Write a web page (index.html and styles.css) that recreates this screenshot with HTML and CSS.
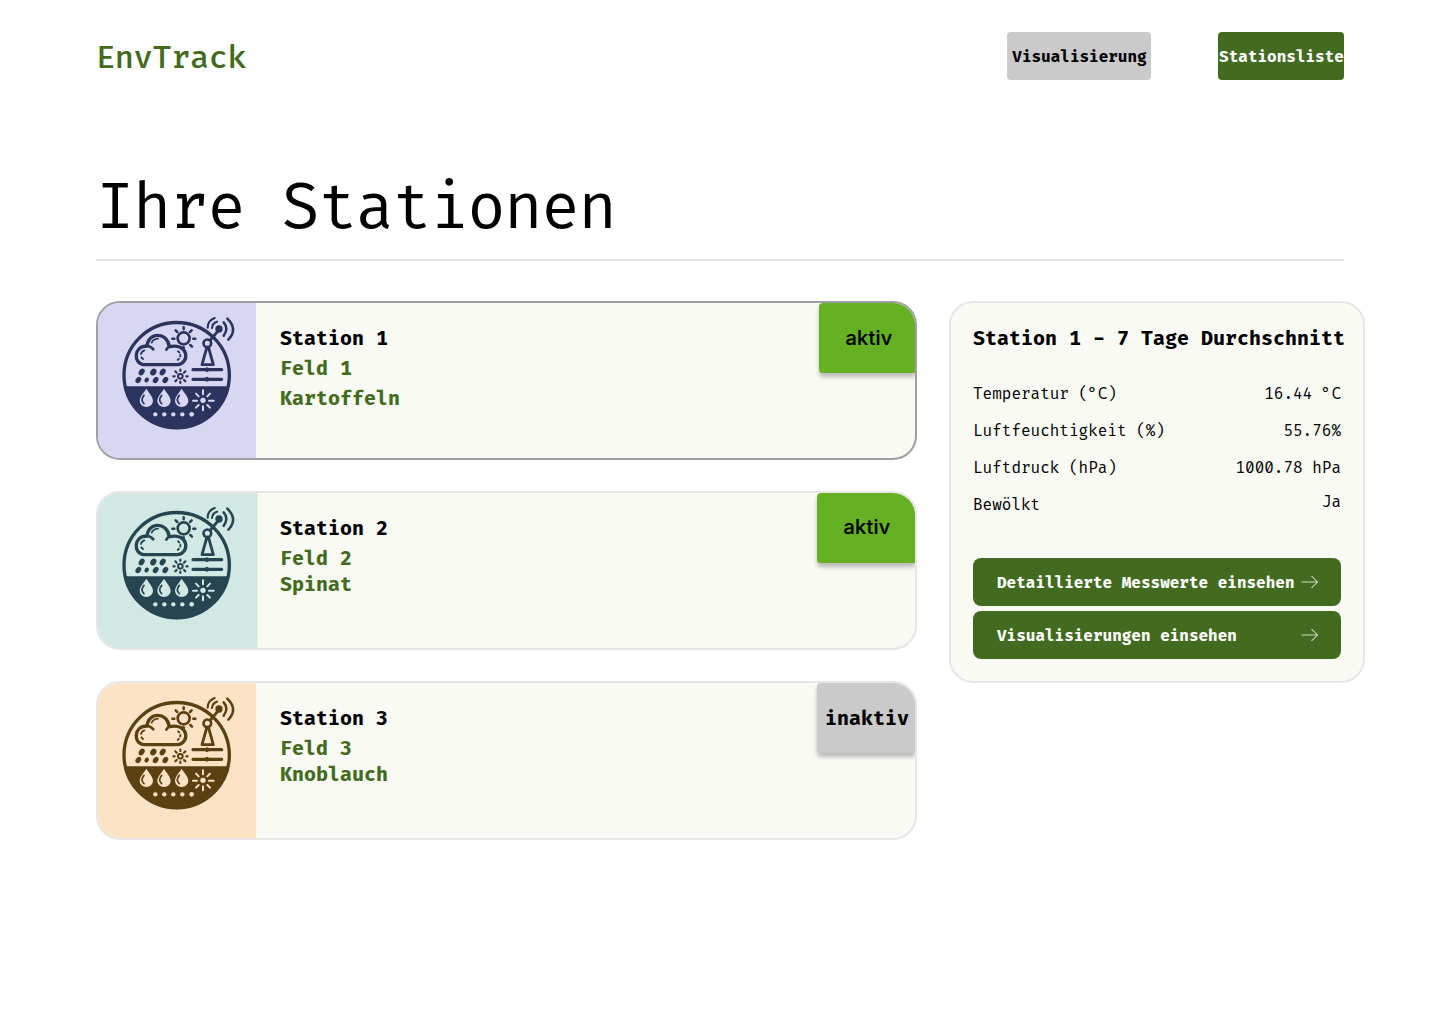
FILE: index.html
```html
<!DOCTYPE html>
<html lang="de">
<head>
<meta charset="utf-8">
<title>EnvTrack – Ihre Stationen</title>
<link rel="stylesheet" href="styles.css">
</head>
<body>
<svg class="sprite" aria-hidden="true">
  <symbol id="station" viewBox="24 24 474 465">
    <g fill="none" stroke="currentColor" stroke-width="10" stroke-linecap="round" stroke-linejoin="round">
      <circle cx="260" cy="240.500" r="158"/>
      <path d="M160 209C130 205 130 153 171 153C174 112 231 108 238 155C298 142 299 205 264 209Z"/>
      <path d="M171 153Q182 153 190 163M238 155Q232 158 229 164" stroke-width="8"/>
      <path d="M185 143Q190 132 204 131M153 177Q154 169 163 166M154 187L159 192" stroke-width="5.500"/>
      <path d="M264 169Q276 178 268 189Q265 195 256 198" stroke-width="5.500" stroke-dasharray="5 8"/>
      <circle cx="281" cy="130" r="18" stroke-width="8"/>
      <path d="M281 97V103M281 157V163M247 131H253M310 131H316M257 106L262 111M305 106L300 111M301 150L306 155" stroke-width="7.500"/>
      <circle cx="352" cy="145" r="11.500" stroke-width="8"/>
      <path d="M350 159L336 209H370L356 159M361 135L385 107" stroke-width="8.500"/>
      <path d="M374 69Q353 77 353 98M381 80Q367 84 366 99" stroke-width="6.500"/>
      <path d="M401 82Q417 100 401 122M412 71Q445 103 415 134" stroke-width="7.500"/>
      <path d="M309 224H395M309 253H395" stroke-width="9.500"/>
      <path d="M351 222V226M351 251V255" stroke-width="11"/>
      <circle cx="271" cy="244" r="7" stroke-width="6"/>
      <path d="M271 224V228M271 260V264M250 244H254M289 244H293M256 229L260 233M286 229L282 233M256 259L260 255M286 259L282 255" stroke-width="6.500"/>
    </g>
    <g fill="currentColor">
      <circle cx="387" cy="102" r="11"/>
      <path d="M101.500 274H418.500A162 162 0 0 1 101.500 274Z"/>
      <ellipse cx="155" cy="231" rx="8" ry="11" transform="rotate(35 155 231)"/>
      <ellipse cx="190" cy="231" rx="8.500" ry="11" transform="rotate(35 190 231)"/>
      <ellipse cx="218" cy="231" rx="8" ry="11" transform="rotate(35 218 231)"/>
      <ellipse cx="145" cy="255" rx="7.500" ry="10.500" transform="rotate(35 145 255)"/>
      <ellipse cx="170" cy="255" rx="6" ry="8" transform="rotate(35 170 255)"/>
      <ellipse cx="197" cy="255" rx="7.500" ry="10.500" transform="rotate(35 197 255)"/>
      <ellipse cx="226" cy="255" rx="7.500" ry="10.500" transform="rotate(35 226 255)"/>
    </g>
    <g class="cutout">
      <path d="M169 281C162 294 149 304 149 318A20 18 0 0 0 189 318C189 304 176 294 169 281Z"/>
      <path d="M222 281C215 294 202 304 202 318A20 18 0 0 0 242 318C242 304 229 294 222 281Z"/>
      <path d="M275 281C268 294 255 304 255 318A20 18 0 0 0 295 318C295 304 282 294 275 281Z"/>
      <circle cx="196" cy="358" r="6.500"/><circle cx="223" cy="358" r="6.500"/><circle cx="250" cy="358" r="6.500"/><circle cx="277" cy="358" r="6.500"/><circle cx="305" cy="358" r="7"/>
      <circle cx="339" cy="316" r="8"/>
      <path class="rays" d="M339 286V298M339 334V346M309 317H321M357 317H371M318 296L326 304M360 296L352 304M318 338L326 330M360 338L352 330"/>
    </g>
    <path d="M162 301Q150 315 162 326M215 301Q203 315 215 326M268 301Q256 315 268 326" fill="none" stroke="currentColor" stroke-width="5" stroke-linecap="round"/>
  </symbol>
  <symbol id="arrow" viewBox="0 0 18 14">
    <path d="M.5 7H16.500" fill="none" stroke="currentColor" stroke-opacity=".75"/>
    <path d="M10.500 1L16.500 7L10.500 13" fill="none" stroke="currentColor"/>
  </symbol>
</svg>

<header class="topbar">
  <div class="brand">EnvTrack</div>
  <nav class="nav">
    <a class="nav-item nav-vis">Visualisierung</a>
    <a class="nav-item nav-list">Stationsliste</a>
  </nav>
</header>

<main class="page">
  <h1 class="title">Ihre Stationen</h1>
  <div class="columns">
    <section class="stations">
      <article class="card selected">
        <div class="tile lilac"><svg><use href="#station"/></svg></div>
        <div class="info roomy"><h2>Station 1</h2><p>Feld 1</p><p>Kartoffeln</p></div>
        <div class="badge active first">aktiv</div>
      </article>
      <article class="card">
        <div class="tile mint"><svg><use href="#station"/></svg></div>
        <div class="info"><h2>Station 2</h2><p>Feld 2</p><p>Spinat</p></div>
        <div class="badge active">aktiv</div>
      </article>
      <article class="card">
        <div class="tile peach"><svg><use href="#station"/></svg></div>
        <div class="info"><h2>Station 3</h2><p>Feld 3</p><p>Knoblauch</p></div>
        <div class="badge inactive">inaktiv</div>
      </article>
    </section>
    <aside class="summary">
      <h2>Station 1 - 7 Tage Durchschnitt</h2>
      <dl class="values">
        <div><dt>Temperatur (°C)</dt><dd>16.44 °C</dd></div>
        <div><dt>Luftfeuchtigkeit (%)</dt><dd>55.76%</dd></div>
        <div><dt>Luftdruck (hPa)</dt><dd>1000.78 hPa</dd></div>
        <div><dt>Bewölkt</dt><dd class="raised">Ja</dd></div>
      </dl>
      <div class="actions">
        <a class="action">Detaillierte Messwerte einsehen<svg><use href="#arrow"/></svg></a>
        <a class="action">Visualisierungen einsehen<svg><use href="#arrow"/></svg></a>
      </div>
    </aside>
  </div>
</main>
</body>
</html>
```
FILE: styles.css
```css
* { box-sizing: border-box; }
body {
  margin: 0;
  background: #fff;
  color: #000;
  font-family: "Fira Code", "DejaVu Sans Mono", monospace;
  font-size: 15.6px;
}
h1, h2, p, dl, dd { margin: 0; }
.sprite { position: absolute; width: 0; height: 0; }

.topbar {
  display: flex;
  justify-content: space-between;
  padding: 32px 96px 0;
  height: 80px;
}
.brand {
  color: #436b20;
  font-size: 31.2px;
  font-weight: 500;
  line-height: 48px;
  letter-spacing: -.4px;
  padding-top: 3px;
}
.nav { display: flex; gap: 67px; }
.nav-item {
  display: flex;
  align-items: center;
  justify-content: center;
  height: 48px;
  padding: 2px 0 0 1px;
  border-radius: 4px;
  font-weight: 700;
  white-space: nowrap;
}
.nav-vis { width: 144px; background: #cacaca; }
.nav-list { width: 126px; background: #436b20; color: #fff; }

.page { padding: 0 75px 0 96px; }
.title {
  width: 1248px;
  height: 181px;
  padding-top: 89px;
  border-bottom: 2px solid #e6e6e6;
  font-size: 62.4px;
  font-weight: 400;
  line-height: 80px;
  letter-spacing: -1.28px;
}
.columns {
  display: flex;
  align-items: flex-start;
  gap: 32px;
  padding-top: 40px;
}
.stations {
  display: flex;
  flex-direction: column;
  gap: 31px;
  width: 821px;
}
.card {
  display: flex;
  align-items: flex-start;
  height: 159px;
  border: 2px solid #e6e6e6;
  border-radius: 24px;
  background: #f9faf4;
  overflow: hidden;
}
.selected { border-color: #a0a0a0; }
.tile { width: 158px; height: 155px; }
.tile svg { display: block; width: 158px; height: 155px; }
.lilac { background: #d8d7f3; color: #2b345d; --tile: #d8d7f3; }
.mint { background: #d2e8e5; color: #254551; --tile: #d2e8e5; box-shadow: 1px 0 2px rgba(0, 0, 0, .15); }
.peach { background: #fde3c6; color: #5b4011; --tile: #fde3c6; }
.cutout { fill: var(--tile); }
.rays { fill: none; stroke: var(--tile); stroke-width: 6; stroke-linecap: round; }

.info { flex: 1; padding: 21px 24px; }
.info h2, .info p, .summary h2 {
  font-size: 19.5px;
  font-weight: 700;
  line-height: 30px;
  white-space: nowrap;
}
.info p { color: #436b20; }
.info p + p { margin-top: -4px; }
.roomy p + p { margin-top: 0; }
.badge {
  display: flex;
  align-items: center;
  justify-content: center;
  width: 98px;
  height: 70px;
  border-radius: 4px 0 0 4px;
  box-shadow: 0 4px 4px rgba(0, 0, 0, .25);
}
.active {
  background: #65b023;
  font: 500 20px/28px Inter, sans-serif;
  letter-spacing: .2px;
  -webkit-text-stroke: .2px #000;
  padding: 0 0 2px 2px;
}
.first { width: 96px; padding: 0 0 0 4px; }
.inactive {
  background: #cacaca;
  font-size: 19.5px;
  font-weight: 700;
  padding: 1px 0 0 2px;
}

.summary {
  width: 416px;
  height: 382px;
  padding: 21px 22px;
  border: 2px solid #e6e6e6;
  border-radius: 24px;
  background: #f9faf4;
}
.values { padding-top: 22px; }
.values div {
  display: flex;
  justify-content: space-between;
  height: 37px;
  line-height: 37px;
}
.raised { margin-top: -3px; }
.actions {
  display: flex;
  flex-direction: column;
  gap: 5px;
  padding-top: 34px;
}
.action {
  display: flex;
  align-items: center;
  justify-content: space-between;
  height: 48px;
  padding: 2px 22px 0 24px;
  border-radius: 8px;
  background: #436b20;
  color: #fff;
  font-weight: 700;
  white-space: nowrap;
}
.action svg { flex: none; width: 18px; height: 14px; margin-top: -2px; }
```
